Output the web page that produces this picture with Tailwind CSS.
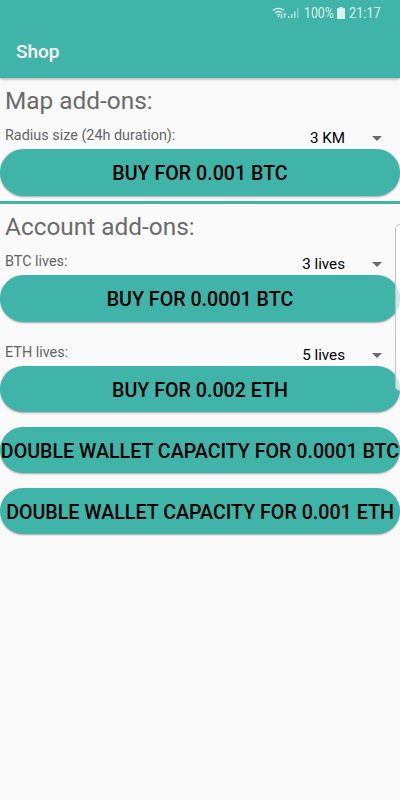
<!DOCTYPE html>
<html lang="en">
<head>
    <meta charset="UTF-8">
    <meta name="viewport" content="width=device-width, initial-scale=1.0">
    <title>Shop</title>
    <script src="https://cdn.jsdelivr.net/npm/@tailwindcss/browser@4"></script>
</head>
<body class="relative h-[800px] w-[400px] overflow-hidden bg-[#fafafa] font-[Roboto,sans-serif] text-black">
    <!-- Status bar and toolbar -->
    <header class="h-[78px] bg-[#40b4a8] text-white shadow-[0_1px_3px_rgba(0,0,0,0.35)]">
        <div class="flex h-[25px] items-center justify-end pr-[19px] text-[#d9f3ef]">
            <svg class="mr-px h-[14px] w-[15px]" viewBox="0 0 15 14" fill="none" stroke="currentColor" stroke-width="1.3">
                <path d="M.8 4.6Q6.5 0 12.2 4.6M2.8 7Q6.5 4 10.2 7M4.6 9.2Q6.5 7.6 8.2 9.2" />
                <path d="M5.3 10.2h2.4L6.5 11.8z" fill="currentColor" stroke="none" />
                <path d="M9.6 8v4M8.4 10.8l1.2 1.4 1.2-1.4M12.8 11.5v-4M11.6 8.8l1.2-1.4L14 8.8" stroke-width="1" />
            </svg>
            <svg class="mr-[5px] h-[12px] w-[11px]" viewBox="0 0 11 12" fill="currentColor">
                <path d="M0 9h1.5v2H0zM3 7h1.5v4H3zM6 4.5h1.5V11H6z" opacity=".8" />
                <path d="M9 1h1.5v10H9z" opacity=".4" />
            </svg>
            <span class="w-[30px] origin-left text-sm leading-none whitespace-nowrap scale-x-[0.88]">100%</span>
            <svg class="mr-1 ml-[3px] h-[12px] w-[8px]" viewBox="0 0 8 12" fill="currentColor">
                <path d="M2.3 0h3.4v1.3H8V12H0V1.3h2.3z" />
            </svg>
            <span class="w-[32px] origin-left text-sm leading-none whitespace-nowrap scale-x-[0.91]">21:17</span>
        </div>
        <h1 class="pt-[15px] pl-4 text-[19px] leading-6 font-medium">Shop</h1>
    </header>

    <main>
        <!-- Map add-ons -->
        <section class="h-[123px]">
            <h2 class="h-[45px] pt-2 pl-[5px] text-[24.4px] leading-[30px] whitespace-nowrap text-[#6b6b6b]">Map add-ons:</h2>
            <div class="flex h-[26px] justify-between pr-[18px] pl-[5px]">
                <span class="pt-1 text-[14.4px] leading-[18px] text-[#656565]">Radius size (24h duration):</span>
                <div class="flex gap-[27px]">
                    <span class="pt-[6px] text-[15.2px] leading-[18px]">3 KM</span>
                    <svg class="mt-[13px] h-[5px] w-[10px]" viewBox="0 0 10 5" fill="#696969"><path d="M0 0h10L5 5z" /></svg>
                </div>
            </div>
            <button class="flex h-[47px] w-full items-center justify-center rounded-full bg-[#40b4a8] pt-[3px] text-[19.65px] font-medium whitespace-nowrap shadow-[0_1px_2px_rgba(0,0,0,0.35)]">BUY FOR 0.001 BTC</button>
        </section>

        <hr class="h-[3px] border-0 bg-[#40b4a8]">

        <!-- Account add-ons -->
        <section>
            <h2 class="h-[45px] pt-2 pl-[5px] text-[24.4px] leading-[30px] whitespace-nowrap text-[#6b6b6b]">Account add-ons:</h2>
            <div class="flex h-[26px] justify-between pr-[18px] pl-[5px]">
                <span class="pt-1 text-[14.4px] leading-[18px] text-[#656565]">BTC lives:</span>
                <div class="flex gap-[27px]">
                    <span class="pt-[6px] text-[15.2px] leading-[18px]">3 lives</span>
                    <svg class="mt-[13px] h-[5px] w-[10px]" viewBox="0 0 10 5" fill="#696969"><path d="M0 0h10L5 5z" /></svg>
                </div>
            </div>
            <button class="flex h-[47px] w-full items-center justify-center rounded-full bg-[#40b4a8] pt-[3px] text-[19.65px] font-medium whitespace-nowrap shadow-[0_1px_2px_rgba(0,0,0,0.35)]">BUY FOR 0.0001 BTC</button>

            <div class="mt-[18px] flex h-[26px] justify-between pr-[18px] pl-[5px]">
                <span class="pt-1 text-[14.4px] leading-[18px] text-[#656565]">ETH lives:</span>
                <div class="flex gap-[27px]">
                    <span class="pt-[6px] text-[15.2px] leading-[18px]">5 lives</span>
                    <svg class="mt-[13px] h-[5px] w-[10px]" viewBox="0 0 10 5" fill="#696969"><path d="M0 0h10L5 5z" /></svg>
                </div>
            </div>
            <div class="flex flex-col gap-[15px]">
                <button class="flex h-[46px] w-full items-center justify-center rounded-full bg-[#40b4a8] pt-[3px] text-[19.65px] font-medium whitespace-nowrap shadow-[0_1px_2px_rgba(0,0,0,0.35)]">BUY FOR 0.002 ETH</button>
                <button class="flex h-[46px] w-full items-center justify-center rounded-full bg-[#40b4a8] pt-[3px] text-[19.65px] font-medium whitespace-nowrap shadow-[0_1px_2px_rgba(0,0,0,0.35)]">DOUBLE WALLET CAPACITY FOR 0.0001 BTC</button>
                <button class="flex h-[46px] w-full items-center justify-center rounded-full bg-[#40b4a8] pt-[3px] text-[19.65px] font-medium whitespace-nowrap shadow-[0_1px_2px_rgba(0,0,0,0.35)]">DOUBLE WALLET CAPACITY FOR 0.001 ETH</button>
            </div>
        </section>
    </main>

    <!-- Edge panel handle -->
    <div class="absolute top-[224px] -right-[6px] h-[167px] w-[11px] rounded-l-[5px] border border-[#b5b5b5]/80 bg-white/70"></div>
</body>
</html>
